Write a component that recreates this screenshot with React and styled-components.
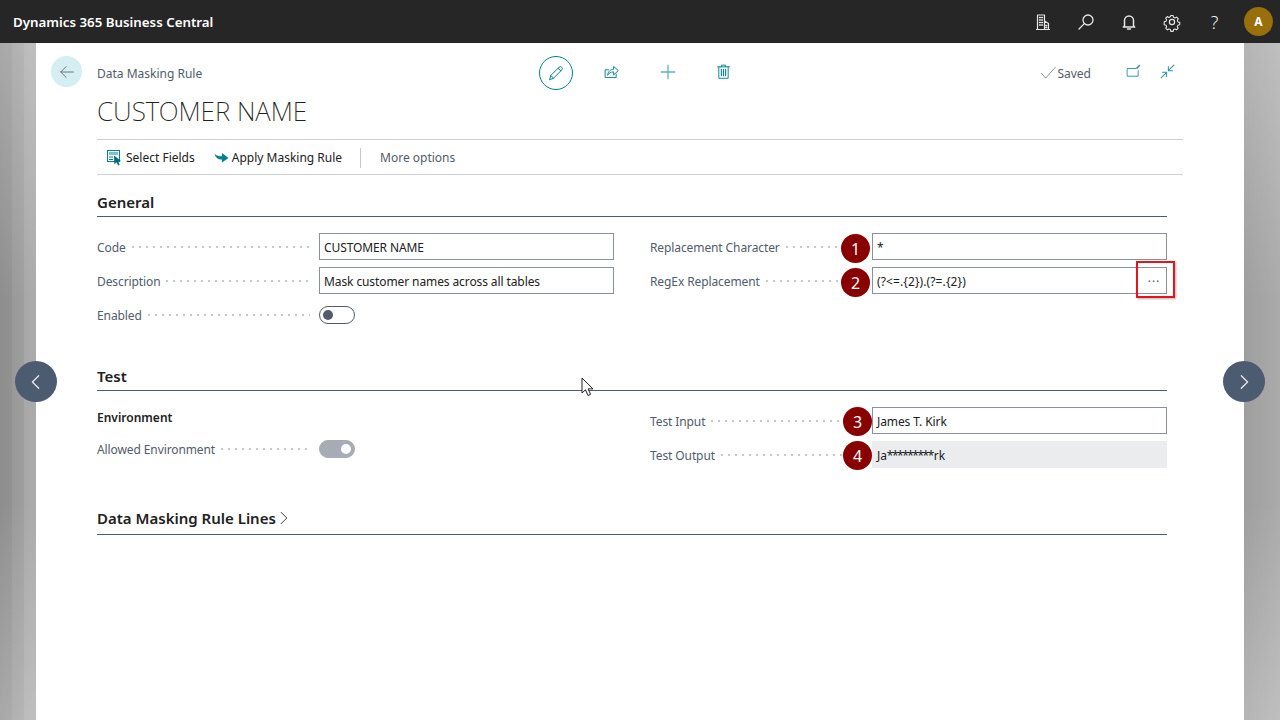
import React from 'react'
import styled, { createGlobalStyle } from 'styled-components'

const GlobalStyle = createGlobalStyle`
  html, body { margin: 0; padding: 0; height: 100%; overflow: hidden; background: #fff; }
  body { font-family: "Noto Sans", "Open Sans", "Liberation Sans", sans-serif; font-size: 12.5px; color: #212121; }
  #root { height: 100%; }
`

const Stroke = ({ size = 20, color = 'currentColor', width = 1, children }) => (
  <svg width={size} height={size} viewBox="0 0 20 20" fill="none" stroke={color} strokeWidth={width} strokeLinecap="round" strokeLinejoin="round">
    {children}
  </svg>
)

const App = () => {
  return (
    <Page>
      <GlobalStyle />
      <TopBar>
        <Brand>Dynamics 365 Business Central</Brand>
        <TopIcons>
          <TopIcon>
            <Stroke width={1.2}>
              <path d="M4.5 17.5V3h7v14.5M11.500 9l4 2.500v6M3.500 17.500h13" />
              <path d="M6.500 5.500h.8M8.700 5.500h.8M6.500 8h.8M8.700 8h.8M6.500 10.500h.8M8.700 10.500h.8M6.500 13h.8M8.700 13h.8M12.800 13.500h1M12.800 15.500h1" strokeWidth="1.500" />
            </Stroke>
          </TopIcon>
          <TopIcon>
            <Stroke width={1.3}>
              <circle cx="12" cy="8" r="5" />
              <path d="M8.300 11.600L3 17" />
            </Stroke>
          </TopIcon>
          <TopIcon>
            <Stroke width={1.5}>
              <path d="M5.500 14V8.500a4.500 4.500 0 0 1 9 0V14l1.200 1H4.300z" />
              <path d="M8.500 17h3" />
            </Stroke>
          </TopIcon>
          <TopIcon>
            <Stroke width={1.2}>
              <circle cx="10" cy="10" r="2.600" />
              <path d="M8.700 2.800h2.600l.4 2 1.700.8 1.800-1 1.800 1.900-1 1.700.6 1.700 2 .5v2.600l-2 .5-.7 1.700 1 1.700-1.800 1.800-1.700-1-1.700.7-.4 2H8.700l-.5-2-1.700-.7-1.700 1-1.800-1.800 1-1.700-.7-1.700-2-.5V9.700l2-.5.7-1.700-1-1.700 1.800-1.900 1.700 1 1.700-.8z" transform="translate(1 1) scale(.9)" />
            </Stroke>
          </TopIcon>
          <HelpMark>?</HelpMark>
          <Avatar>A</Avatar>
        </TopIcons>
      </TopBar>

      <Stage>
        <SideBand />
        <Card>
          <Header>
            <BackButton>
              <Stroke size={18} color="#5f6b73">
                <path d="M17 10H3M9 4l-6 6 6 6" />
              </Stroke>
            </BackButton>
            <HeaderMain>
              <HeaderTop>
                <Breadcrumb>Data Masking Rule</Breadcrumb>
                <Actions>
                  <EditCircle>
                    <Stroke size={18} color="#00838f" width={1.1}>
                      <path d="M3 17l1.200-4.200L13.600 3.400a1.600 1.600 0 0 1 2.300 0l.7.7a1.600 1.600 0 0 1 0 2.300L7.200 15.800z" />
                      <path d="M12.300 4.700l3 3M4.200 12.800l3 3" />
                    </Stroke>
                  </EditCircle>
                  <ActionIcon>
                    <Stroke size={17} color="#00838f" width={1.1}>
                      <path d="M15.500 13v4H2.500V8h4" />
                      <path d="M5.500 14c.5-4.500 3.500-6.500 7-6.500V4l5.500 5-5.500 5v-3.500c-3 0-5.500 1-7 3.500z" />
                    </Stroke>
                  </ActionIcon>
                  <ActionIcon $tight>
                    <Stroke size={18} color="#5fb3ba" width={1.4}>
                      <path d="M10 2.500v15M2.500 10h15" />
                    </Stroke>
                  </ActionIcon>
                  <ActionIcon>
                    <Stroke size={17} color="#00838f" width={1.1}>
                      <path d="M3 4.500h14M7.500 4.500V2.500h5v2M4.500 4.500V18h11V4.500" />
                      <path d="M7.500 7.500v7.500M10 7.500v7.500M12.500 7.500v7.500" strokeWidth="1.300" />
                    </Stroke>
                  </ActionIcon>
                </Actions>
                <Status>
                  <Saved>
                    <Stroke size={16} color="#5f6b73" width={0.9}>
                      <path d="M2 10.500l5 6L19 3" />
                    </Stroke>
                    Saved
                  </Saved>
                  <StatusIcon>
                    <Stroke size={17} color="#2e97a3" width={1.1}>
                      <path d="M15.500 9v6.500h-13V6.500h10" />
                      <path d="M14 6l3-3" strokeWidth="1.800" />
                    </Stroke>
                  </StatusIcon>
                  <StatusIcon>
                    <Stroke size={17} color="#2e97a3" width={1.2}>
                      <path d="M17.500 2.500l-6 6M11 4v5h5M2.500 17.500l6-6M4 11h5v5" />
                    </Stroke>
                  </StatusIcon>
                </Status>
              </HeaderTop>
              <Title>CUSTOMER NAME</Title>
              <Toolbar>
                <ToolButton>
                  <svg width="16" height="17" viewBox="0 0 16 17">
                    <rect x="0.500" y="1.500" width="12" height="11" fill="#fff" stroke="#00838f" />
                    <rect x="2" y="3" width="9" height="3" fill="#7fc1c7" />
                    <path d="M2 8h4M2 10.500h4" stroke="#00838f" />
                    <path d="M7 6.500l7 5.500-3 .4 1.700 3.200-1.500.8-1.600-3.200-2.200 2z" fill="#00697a" />
                  </svg>
                  Select Fields
                </ToolButton>
                <ToolButton>
                  <svg width="15" height="11" viewBox="0 0 15 11">
                    <path d="M.5 1.500c2 2.500 4.500 3 7.500 2.500V1l6.500 5L8 10.500V7.500C4.500 8 1.500 6 .5 1.500z" fill="#00838f" />
                  </svg>
                  Apply Masking Rule
                </ToolButton>
                <ToolDivider />
                <MoreOptions>More options</MoreOptions>
              </Toolbar>
            </HeaderMain>
          </Header>

          <Content>
            <Section>
              <SectionTitle>General</SectionTitle>
              <FormGrid>
                <FormColumn>
                  <Field label="Code"><TextBox>CUSTOMER NAME</TextBox></Field>
                  <Field label="Description"><TextBox>Mask customer names across all tables</TextBox></Field>
                  <Field label="Enabled"><Toggle /></Field>
                </FormColumn>
                <FormColumn>
                  <Field label="Replacement Character">
                    <TextBox>*</TextBox>
                    <Callout>1</Callout>
                  </Field>
                  <Field label="RegEx Replacement">
                    <TextBox>
                      <Regex>(?&lt;=.{'{2}'}).(?=.{'{2}'})</Regex>
                      <Ellipsis>···</Ellipsis>
                    </TextBox>
                    <Callout>2</Callout>
                    <Highlight />
                  </Field>
                </FormColumn>
              </FormGrid>
            </Section>

            <TestSection>
              <SectionTitle>Test</SectionTitle>
              <FormGrid>
                <EnvironmentColumn>
                  <GroupTitle>Environment</GroupTitle>
                  <Field label="Allowed Environment"><Toggle $on /></Field>
                </EnvironmentColumn>
                <FormColumn>
                  <Field label="Test Input">
                    <TextBox>James T. Kirk</TextBox>
                    <Callout $low>3</Callout>
                  </Field>
                  <Field label="Test Output">
                    <ReadOnlyBox><span>Ja<Stars>*********</Stars>rk</span></ReadOnlyBox>
                    <Callout $low>4</Callout>
                  </Field>
                </FormColumn>
              </FormGrid>
            </TestSection>

            <LinesSection>
              <LinesTitle>
                Data Masking Rule Lines
                <Stroke size={14} color="#333" width={1.3}>
                  <path d="M6 2l8 8-8 8" />
                </Stroke>
              </LinesTitle>
            </LinesSection>
          </Content>
        </Card>
        <SideBand $right />

        <PageArrow $side="left">
          <Stroke size={18} color="#e8ebef" width={1.4}><path d="M13 3l-7 7 7 7" /></Stroke>
        </PageArrow>
        <PageArrow $side="right">
          <Stroke size={18} color="#e8ebef" width={1.4}><path d="M7 3l7 7-7 7" /></Stroke>
        </PageArrow>
        <Pointer>
          <svg width="14" height="20" viewBox="0 0 14 20">
            <path d="M1 1v15l3.500-3.200 2.500 5.700 2.600-1.100-2.500-5.500H12z" fill="#fff" stroke="#222" strokeWidth="1" strokeLinejoin="round" />
          </svg>
        </Pointer>
      </Stage>
    </Page>
  )
}

const Field = ({ label, children }) => (
  <FieldRow>
    <FieldLabel>
      <span>{label}</span>
      <Dots />
    </FieldLabel>
    <FieldValue>{children}</FieldValue>
  </FieldRow>
)

export default App

const Page = styled.div`
  height: 720px;
  display: flex;
  flex-direction: column;
  overflow: hidden;
`
const TopBar = styled.div`
  height: 43px;
  flex: none;
  background: #262626;
  display: flex;
  align-items: center;
  justify-content: space-between;
  padding: 0 7px 0 13px;
`
const Brand = styled.div`
  color: #fff;
  font-size: 13.3px;
  font-weight: 600;
`
const TopIcons = styled.div`
  display: flex;
  align-items: center;
`
const TopIcon = styled.div`
  width: 43px;
  display: flex;
  justify-content: center;
  color: #e6e6e6;
`
const HelpMark = styled(TopIcon)`
  font-size: 18px;
  font-weight: 300;
  color: #f0f0f0;
  margin-right: 8px;
`
const Avatar = styled.div`
  width: 29px;
  height: 29px;
  border-radius: 50%;
  background: #986f0b;
  color: #fff;
  font-size: 12px;
  font-weight: 700;
  display: flex;
  align-items: center;
  justify-content: center;
`
const Stage = styled.div`
  position: relative;
  flex: 1;
  display: flex;
`
const SideBand = styled.div`
  width: 36px;
  flex: none;
  background:
    linear-gradient(180deg, rgba(255, 255, 255, 0.24) 0, rgba(255, 255, 255, 0) 38%, rgba(255, 255, 255, 0) 68%, rgba(255, 255, 255, 0.24) 100%),
    ${(p) =>
      p.$right
        ? 'linear-gradient(90deg, #9e9e9e 0, #ababab 36px)'
        : 'linear-gradient(90deg, #8e8e8e 0, #929292 12px, #999 12px, #9e9e9e 24px, #a8a8a8 24px, #ababab 36px)'};
`
const Card = styled.div`
  flex: 1;
  background: #fff;
  display: flex;
  flex-direction: column;
  padding: 13px 61px 0 15px;
`
const Header = styled.div`
  display: flex;
  gap: 15px;
`
const BackButton = styled.div`
  width: 31px;
  height: 31px;
  flex: none;
  border-radius: 50%;
  background: #d5eef1;
  display: flex;
  align-items: center;
  justify-content: center;
`
const HeaderMain = styled.div`
  flex: 1;
  min-width: 0;
`
const HeaderTop = styled.div`
  height: 34px;
  display: flex;
  align-items: center;
`
const Breadcrumb = styled.div`
  width: 442px;
  flex: none;
  color: #505c6d;
  font-size: 12px;
  padding-top: 1px;
`
const Actions = styled.div`
  display: flex;
  align-items: center;
`
const EditCircle = styled.div`
  width: 32px;
  height: 32px;
  border: 1px solid #00838f;
  border-radius: 50%;
  display: flex;
  align-items: center;
  justify-content: center;
  margin-right: 29px;
`
const ActionIcon = styled.div`
  width: 18px;
  display: flex;
  justify-content: center;
  margin: 0 ${(p) => (p.$tight ? '37px' : '39px')} 3px 0;
`
const Status = styled.div`
  margin-left: auto;
  display: flex;
  align-items: center;
  gap: 17px;
  margin-right: 7px;
`
const Saved = styled.div`
  display: flex;
  align-items: center;
  gap: 1px;
  color: #505c6d;
  font-size: 12px;
  margin-right: 17px;
`
const StatusIcon = styled.div`
  width: 17px;
  display: flex;
  margin-bottom: 3px;
`
const Title = styled.h1`
  margin: 3px 0 0;
  height: 36px;
  line-height: 36px;
  font-size: 26px;
  font-weight: 200;
  color: #212121;
`
const Toolbar = styled.div`
  margin-top: 10px;
  height: 33px;
  box-sizing: content-box;
  border-top: 1px solid #d0d0d0;
  border-bottom: 1px solid #d0d0d0;
  display: flex;
  align-items: center;
  padding: 1px 0 0 10px;
`
const ToolButton = styled.div`
  display: flex;
  align-items: center;
  gap: 3px;
  margin-right: 19px;
  font-size: 12px;
  color: #212121;
`
const ToolDivider = styled.div`
  width: 1px;
  height: 20px;
  background: #c8c8c8;
  margin: 0 19px 0 -1px;
`
const MoreOptions = styled.div`
  color: #505c6d;
  font-size: 12px;
`
const Content = styled.div`
  margin-left: 46px;
  width: 1070px;
`
const Section = styled.section`
  padding-top: 16px;
`
const TestSection = styled(Section)`
  padding-top: 37px;
`
const LinesSection = styled(Section)`
  padding-top: 41px;
`
const SectionTitle = styled.h2`
  margin: 0;
  height: 26px;
  box-sizing: border-box;
  padding-bottom: 4px;
  font-size: 15px;
  font-weight: 600;
  color: #212121;
  border-bottom: 1px solid #505c6d;
  display: flex;
  align-items: center;
  gap: 1px;
`
const LinesTitle = styled(SectionTitle)`
  padding-bottom: 8px;
`
const FormGrid = styled.div`
  display: grid;
  grid-template-columns: 517px 517px;
  column-gap: 36px;
  padding-top: 16px;
`
const FormColumn = styled.div`
  display: flex;
  flex-direction: column;
  gap: 7px;
`
const EnvironmentColumn = styled(FormColumn)`
  padding-top: 1px;
`
const GroupTitle = styled.div`
  font-size: 12px;
  font-weight: 600;
  height: 20px;
  line-height: 20px;
`
const FieldRow = styled.div`
  display: flex;
  align-items: center;
  height: 27px;
`
const FieldLabel = styled.div`
  width: 222px;
  flex: none;
  display: flex;
  align-items: center;
  gap: 6px;
  padding: 1px 9px 0 0;
  box-sizing: border-box;
  color: #505c6d;
  font-size: 12px;
  letter-spacing: -0.1px;
  white-space: nowrap;
`
const Dots = styled.div`
  flex: 1;
  height: 2px;
  background: radial-gradient(circle at 1px 1px, #c4c8ce 0.8px, transparent 1px) 0 0 / 7px 2px repeat-x;
`
const FieldValue = styled.div`
  position: relative;
  flex: 1;
  display: flex;
  align-items: center;
`
const TextBox = styled.div`
  flex: 1;
  height: 27px;
  box-sizing: border-box;
  border: 1px solid #8a919c;
  padding: 1px 4px 0;
  font-size: 12px;
  letter-spacing: -0.1px;
  color: #212121;
  display: flex;
  align-items: center;
  justify-content: space-between;
`
const ReadOnlyBox = styled(TextBox)`
  background: #ebecee;
  border-color: #ebecee;
`
const Regex = styled.span`
  letter-spacing: 0.1px;
`
const Stars = styled.span`
  letter-spacing: -1.5px;
  margin-right: 1px;
`
const Ellipsis = styled.span`
  width: 24px;
  text-align: center;
  margin-right: -4px;
  letter-spacing: 1px;
  color: #505c6d;
`
const Toggle = styled.div`
  position: relative;
  width: 36px;
  height: 18px;
  box-sizing: border-box;
  border-radius: 9px;
  border: 1px solid ${(p) => (p.$on ? '#a6abb5' : '#505c6d')};
  background: ${(p) => (p.$on ? '#a6abb5' : '#fff')};
  &::after {
    content: '';
    position: absolute;
    top: 3px;
    width: 10px;
    height: 10px;
    border-radius: 50%;
    left: ${(p) => (p.$on ? '21px' : '3px')};
    background: ${(p) => (p.$on ? '#fff' : '#505c6d')};
  }
`
const Callout = styled.div`
  position: absolute;
  left: ${(p) => (p.$low ? '-29px' : '-31px')};
  top: ${(p) => (p.$low ? '0' : '1px')};
  width: 29px;
  height: 29px;
  border-radius: 50%;
  background: #880000;
  color: #fff;
  font-size: 16px;
  display: flex;
  align-items: center;
  justify-content: center;
`
const Highlight = styled.div`
  position: absolute;
  right: -8px;
  top: -6px;
  width: 39px;
  height: 37px;
  border: 2px solid #e8141c;
  box-sizing: border-box;
  box-shadow: 1px 1px 2px rgba(0, 0, 0, 0.3);
`
const PageArrow = styled.div`
  position: absolute;
  top: 318px;
  ${(p) => (p.$side === 'left' ? 'left: 15px;' : 'right: 15px;')}
  width: 42px;
  height: 41px;
  border-radius: 50%;
  background: #4d5b70;
  display: flex;
  align-items: center;
  justify-content: center;
`
const Pointer = styled.div`
  position: absolute;
  left: 581px;
  top: 334px;
  line-height: 0;
`
